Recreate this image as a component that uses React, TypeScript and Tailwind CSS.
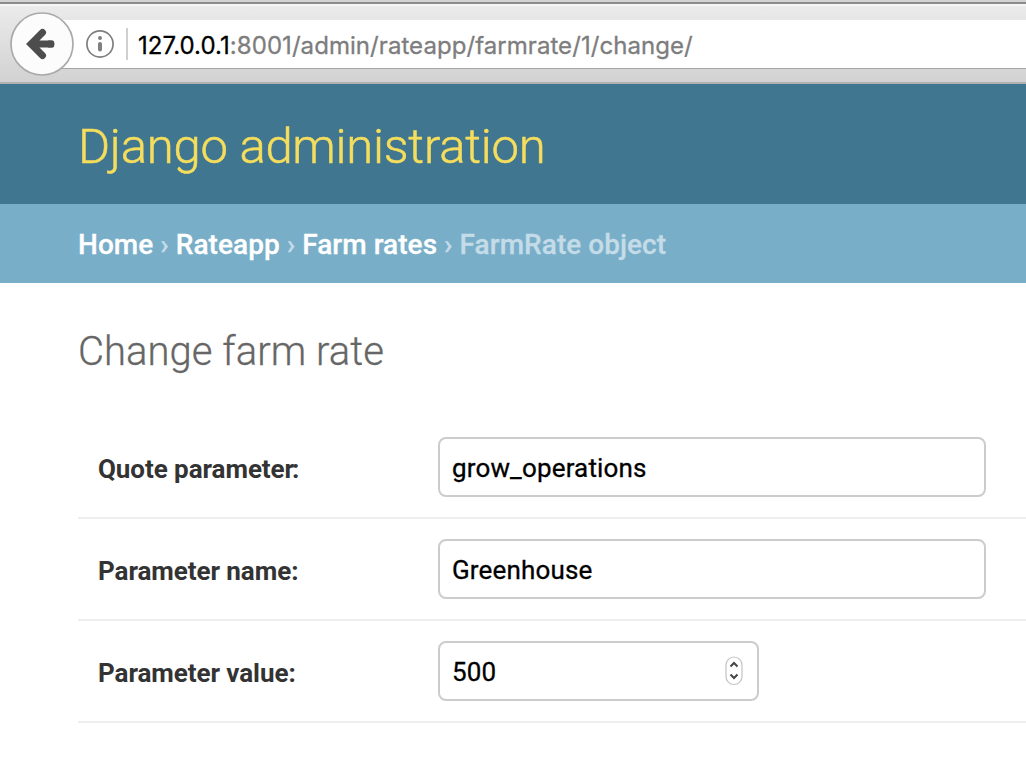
import type { ReactNode } from 'react';

const crumbs = ['Home', 'Rateapp', 'Farm rates'];

function BrowserBar() {
  return (
    <div className="relative h-[84px] bg-[#d6d6d6]">
      <div className="h-[2px] bg-[#d2d2d2]" />
      <div className="h-[2px] bg-[#8b8b8d]" />
      <div className="h-[2px] bg-[#f5f5f5]" />
      <div className="h-[76px] bg-linear-to-b from-[#ebebeb] to-[#d2d2d2] pt-[14px] pl-[41px]">
        <div className="flex h-[49px] items-center border-b border-[#a5a5a5] bg-white pl-[45px]">
          <svg className="size-7 shrink-0" viewBox="0 0 28 28" fill="none">
            <circle cx="14" cy="14" r="13.1" stroke="#7f7f7f" strokeWidth="1.7" />
            <circle cx="14" cy="8" r="2" fill="#7f7f7f" />
            <path d="M14 14v5.5" stroke="#7f7f7f" strokeWidth="4" strokeLinecap="round" />
          </svg>
          <div className="ml-3 h-8 w-[2px] bg-[#d0d0d0]" />
          <div className="ml-[10px] pt-[3px] whitespace-nowrap font-['Inter',sans-serif] text-[24px] leading-8 tracking-[0.06px] text-[#7d7d7d] [-webkit-text-stroke:0.3px]">
            <span className="text-black">127.0.0.1</span>
            <span>:8001/admin/rateapp/farmrate/1/change/</span>
          </div>
        </div>
      </div>
      <div className="h-[2px] bg-[#b1b1b1]" />
      <svg className="absolute top-3 left-[10px] size-16" viewBox="0 0 64 64" fill="none">
        <circle cx="32" cy="32" r="31" fill="#fcfcfc" stroke="#aaaaaa" strokeWidth="1.7" />
        <path
          d="M32.5 20.5L21 32l11.5 11.5M23 32h18"
          stroke="#4d4d4d"
          strokeWidth="7"
          strokeLinecap="round"
          strokeLinejoin="miter"
        />
        <path d="M38 28.500h4.500a1.500 1.500 0 0 1 1.500 1.500v4a1.500 1.500 0 0 1-1.500 1.500H38z" fill="#4d4d4d" />
      </svg>
    </div>
  );
}

function Row({ label, children }: { label: string; children: ReactNode }) {
  return (
    <div className="flex h-[102px] items-start border-b-2 border-[#eeeeee] pt-5 pl-5">
      <label className="w-[340px] pt-4 text-[26px] leading-8 font-bold tracking-[-0.06px] text-[#333333]">
        {label}
        <span className={label.endsWith('r') ? '-ml-[2px]' : ''}>:</span>
      </label>
      {children}
    </div>
  );
}

function Field({ value, wide }: { value: string; wide?: boolean }) {
  return (
    <div
      className={`flex h-[60px] items-center justify-between rounded-lg border-2 border-[#cccccc] bg-white pl-3 text-[26px] leading-8 tracking-[0.15px] text-black [-webkit-text-stroke:0.3px] ${wide ? 'w-[548px]' : 'w-[321px] pr-[14px]'}`}
    >
      <span className="pt-[2px]">{value}</span>
      {!wide && (
        <svg className="h-[30px] w-[18px]" viewBox="0 0 18 30" fill="none">
          <rect x="1" y="1" width="16" height="27.5" rx="8" fill="white" stroke="#c4c4c4" strokeWidth="1.2" />
          <path d="M5.5 10.5L9 7l3.500 3.500M5.500 18.500L9 22l3.500-3.500" stroke="#444444" strokeWidth="2" />
        </svg>
      )}
    </div>
  );
}

export default function App() {
  return (
    <div className="h-[758px] w-[1026px] overflow-hidden bg-white font-['Roboto',sans-serif]">
      <BrowserBar />
      <header className="flex h-[120px] items-center bg-[#417690] pl-[78px]">
        <h1 className="pt-[6px] text-[49px] leading-[60px] font-light tracking-[-0.25px] whitespace-nowrap text-[#f5dd5d] [-webkit-text-stroke:0.5px]">
          Django administration
        </h1>
      </header>
      <nav className="flex h-[79px] items-center bg-[#79aec8] pt-[2px] pl-[78px] text-[28px] leading-8 font-medium tracking-[0.04px] whitespace-pre text-[#c4dce8] [-webkit-text-stroke:0.3px]">
        {crumbs.map((crumb) => (
          <span key={crumb}>
            <a className="text-white">{crumb}</a>
            {' › '}
          </span>
        ))}
        <span>FarmRate object</span>
      </nav>
      <main className="pt-[44px] pl-[78px]">
        <h2 className="h-[90px] text-[40px] leading-[50px] font-light tracking-[0.05px] text-[#666666] [-webkit-text-stroke:0.3px]">
          Change farm rate
        </h2>
        <Row label="Quote parameter">
          <Field value="grow_operations" wide />
        </Row>
        <Row label="Parameter name">
          <Field value="Greenhouse" wide />
        </Row>
        <Row label="Parameter value">
          <Field value="500" />
        </Row>
      </main>
    </div>
  );
}
